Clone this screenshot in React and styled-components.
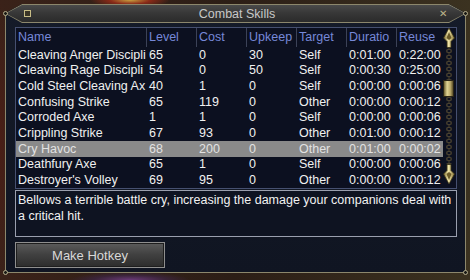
import React from 'react';
import styled, { createGlobalStyle } from 'styled-components';

const GlobalStyle = createGlobalStyle`
  html, body {
    margin: 0;
    padding: 0;
  }
  body {
    background: #2a1c15;
    font-family: 'Liberation Sans', Arial, sans-serif;
  }
`;

const GOLD = '#8c876c';

const Scene = styled.div`
  width: 470px;
  height: 280px;
  box-sizing: border-box;
  padding: 4px 4px 0 5px;
  overflow: hidden;
  background:
    radial-gradient(ellipse 40px 8px at 130px 0, #c9a040 0%, #8a2a18 50%, transparent 100%),
    radial-gradient(ellipse 60px 8px at 130px 280px, #6a3a78 0%, #3a2438 60%, transparent 100%),
    radial-gradient(ellipse 12px 140px at 0 140px, #4a1e16 0%, transparent 100%),
    linear-gradient(90deg, #3a2219 0%, #2c1e16 50%, #3b3220 100%);
`;

const Window = styled.div`
  position: relative;
  width: 461px;
  height: 269px;
`;

const Frame = styled.div`
  height: 100%;
  display: flex;
  flex-direction: column;
  background: linear-gradient(180deg, #151b29 0%, #101522 100%);
  box-shadow: inset 1px 0 ${GOLD}, inset -1px 0 ${GOLD}, inset 0 -1px ${GOLD};
  clip-path: polygon(0 9px, 17px 0, calc(100% - 17px) 0, 100% 9px, 100% 100%, 0 100%);
`;

const Knob = styled.span`
  position: absolute;
  width: 5px;
  height: 5px;
  border-radius: 50%;
  border: 1px solid #b4ad8c;
  background: #1a1a16;
  box-sizing: border-box;
  left: ${p => (p.$right ? 'auto' : '-2px')};
  right: ${p => (p.$right ? '-2px' : 'auto')};
  top: ${p => (p.$bottom ? 'auto' : '7px')};
  bottom: ${p => (p.$bottom ? '-2px' : 'auto')};
`;

const TitleBar = styled.div`
  height: 19px;
  flex: none;
  background: ${GOLD};
  clip-path: polygon(0 9.5px, 17px 0, calc(100% - 17px) 0, 100% 9.5px, calc(100% - 17px) 100%, 17px 100%);
  padding: 1px;
  box-sizing: border-box;
`;

const TitleFill = styled.div`
  height: 100%;
  display: flex;
  align-items: center;
  padding: 0 18px;
  background: linear-gradient(180deg, #4a4a4a 0%, #383838 45%, #2b2b2b 100%);
  clip-path: polygon(0 8.5px, 16px 0, calc(100% - 16px) 0, 100% 8.5px, calc(100% - 16px) 100%, 16px 100%);
`;

const TitleSquare = styled.span`
  width: 5px;
  height: 5px;
  border: 1px solid #c8bd86;
  background: #3a3526;
  flex: none;
`;

const TitleText = styled.div`
  flex: 1;
  text-align: center;
  color: #c8c8c8;
  font-size: 12.5px;
  padding-left: 4px;
`;

const TitleClose = styled.span`
  color: #bdb48a;
  font-size: 10px;
  line-height: 1;
  flex: none;
`;

const Body = styled.div`
  flex: 1;
  display: flex;
  flex-direction: column;
  padding: 4px 9px 0 10px;
`;

const ListPanel = styled.div`
  height: 162px;
  box-sizing: border-box;
  border: 1px solid #465070;
  display: flex;
  background: #0c1020;
`;

const Table = styled.div`
  width: 427px;
  overflow: hidden;
`;

const GRID = '131px 50px 50px 50px 50px 50px 46px';

const HeaderRow = styled.div`
  display: grid;
  grid-template-columns: ${GRID};
  height: 18.7px;
  align-items: center;
`;

const HeaderCell = styled.div`
  height: 100%;
  display: flex;
  align-items: center;
  padding-left: 2px;
  color: #7688d8;
  font-size: 12.5px;
  white-space: nowrap;
  overflow: hidden;
  border-left: ${p => (p.$first ? 'none' : '1px solid #3c4258')};
  margin-left: ${p => (p.$first ? '0' : '-1px')};
`;

const Row = styled.div`
  display: grid;
  grid-template-columns: ${GRID};
  height: 15.7px;
  align-items: center;
  background: ${p => (p.$selected ? '#8a8a8a' : 'transparent')};
  color: ${p => (p.$selected ? '#e2e2e2' : '#f0f0f0')};
`;

const Cell = styled.div`
  min-width: 0;
  padding-left: 2px;
  font-size: 12.5px;
  white-space: nowrap;
  overflow: hidden;
`;

const Scrollbar = styled.div`
  width: 12px;
  display: flex;
  flex-direction: column;
  align-items: center;
  padding: 0 0 4px;
  box-sizing: border-box;
`;

const Track = styled.div`
  position: relative;
  flex: 1;
  width: 12px;
  background:
    radial-gradient(ellipse 3.5px 3px at 6px 3px, #0c1020 40%, #4a4232 50%, #3a3428 80%, transparent 95%) 0 0 / 12px 6px repeat-y;
`;

const Thumb = styled.div`
  position: absolute;
  left: 0;
  top: 32px;
  width: 11px;
  height: 17px;
  box-sizing: border-box;
  border: 1px solid #2a2416;
  background: linear-gradient(90deg, #6b5e30 0%, #e0d394 35%, #bba96a 70%, #5a4e28 100%);
`;

const DescBox = styled.div`
  margin-top: 1px;
  height: 47px;
  box-sizing: border-box;
  border: 1px solid #9a9fae;
  background: #0e1321;
  padding: 1px 3px 0 2px;
  color: #f2f2f2;
  font-size: 12.5px;
  line-height: 16px;
`;

const HotkeyButton = styled.button`
  margin-top: 5px;
  width: 150px;
  height: 26px;
  border: 1px solid #8f8f8f;
  box-shadow: inset 0 0 0 1px #1e1e1e;
  background: linear-gradient(180deg, #5c5c5c 0%, #424242 45%, #2c2c2c 100%);
  color: #d8d8d8;
  font-family: 'Liberation Sans', Arial, sans-serif;
  font-size: 13px;
  padding: 0;
  cursor: pointer;
`;

const Arrow = ({ down }) => (
  <svg width="12" height="20" viewBox="0 0 12 20" style={{ flex: 'none', transform: down ? 'scaleY(-1)' : 'none' }}>
    <defs>
      <linearGradient id={down ? 'gd' : 'gu'} x1="0" x2="1" y1="0" y2="0">
        <stop offset="0" stopColor="#7a6a30" />
        <stop offset="0.45" stopColor="#f0e4a8" />
        <stop offset="1" stopColor="#8a7838" />
      </linearGradient>
    </defs>
    <path d="M6 0 L11.5 10 L8 13.5 L8 19.5 L4 19.5 L4 13.5 L0.5 10 Z" fill={`url(#${down ? 'gd' : 'gu'})`} stroke="#3a3218" strokeWidth="0.8" />
    <path d="M6 4 L8.5 10 L6 12 L3.5 10 Z" fill="#6a5a28" />
  </svg>
);

const columns = ['Name', 'Level', 'Cost', 'Upkeep', 'Target', 'Duratio', 'Reuse'];

const skills = [
  ['Cleaving Anger Discipli', '65', '0', '30', 'Self', '0:01:00', '0:22:00'],
  ['Cleaving Rage Discipli', '54', '0', '50', 'Self', '0:00:30', '0:25:00'],
  ['Cold Steel Cleaving Ax', '40', '1', '0', 'Self', '0:00:00', '0:00:06'],
  ['Confusing Strike', '65', '119', '0', 'Other', '0:00:00', '0:00:12'],
  ['Corroded Axe', '1', '1', '0', 'Self', '0:00:00', '0:00:06'],
  ['Crippling Strike', '67', '93', '0', 'Other', '0:01:00', '0:00:12'],
  ['Cry Havoc', '68', '200', '0', 'Other', '0:01:00', '0:00:02'],
  ['Deathfury Axe', '65', '1', '0', 'Self', '0:00:00', '0:00:06'],
  ["Destroyer's Volley", '69', '95', '0', 'Other', '0:00:00', '0:00:12'],
];

export default function App() {
  const selected = 6;
  return (
    <>
      <GlobalStyle />
      <Scene>
        <Window>
          <Frame>
            <TitleBar>
              <TitleFill>
                <TitleSquare />
                <TitleText>Combat Skills</TitleText>
                <TitleClose>✕</TitleClose>
              </TitleFill>
            </TitleBar>
            <Body>
              <ListPanel>
                <Table>
                  <HeaderRow>
                    {columns.map((c, i) => (
                      <HeaderCell key={c} $first={i === 0}>{c}</HeaderCell>
                    ))}
                  </HeaderRow>
                  {skills.map((s, i) => (
                    <Row key={s[0]} $selected={i === selected}>
                      {s.map((v, j) => (
                        <Cell key={j}>{v}</Cell>
                      ))}
                    </Row>
                  ))}
                </Table>
                <Scrollbar>
                  <Arrow />
                  <Track>
                    <Thumb />
                  </Track>
                  <Arrow down />
                </Scrollbar>
              </ListPanel>
              <DescBox>
                Bellows a terrible battle cry, increasing the damage your companions deal with a critical hit.
              </DescBox>
              <HotkeyButton>Make Hotkey</HotkeyButton>
            </Body>
          </Frame>
          <Knob />
          <Knob $right />
          <Knob $bottom />
          <Knob $right $bottom />
        </Window>
      </Scene>
    </>
  );
}
